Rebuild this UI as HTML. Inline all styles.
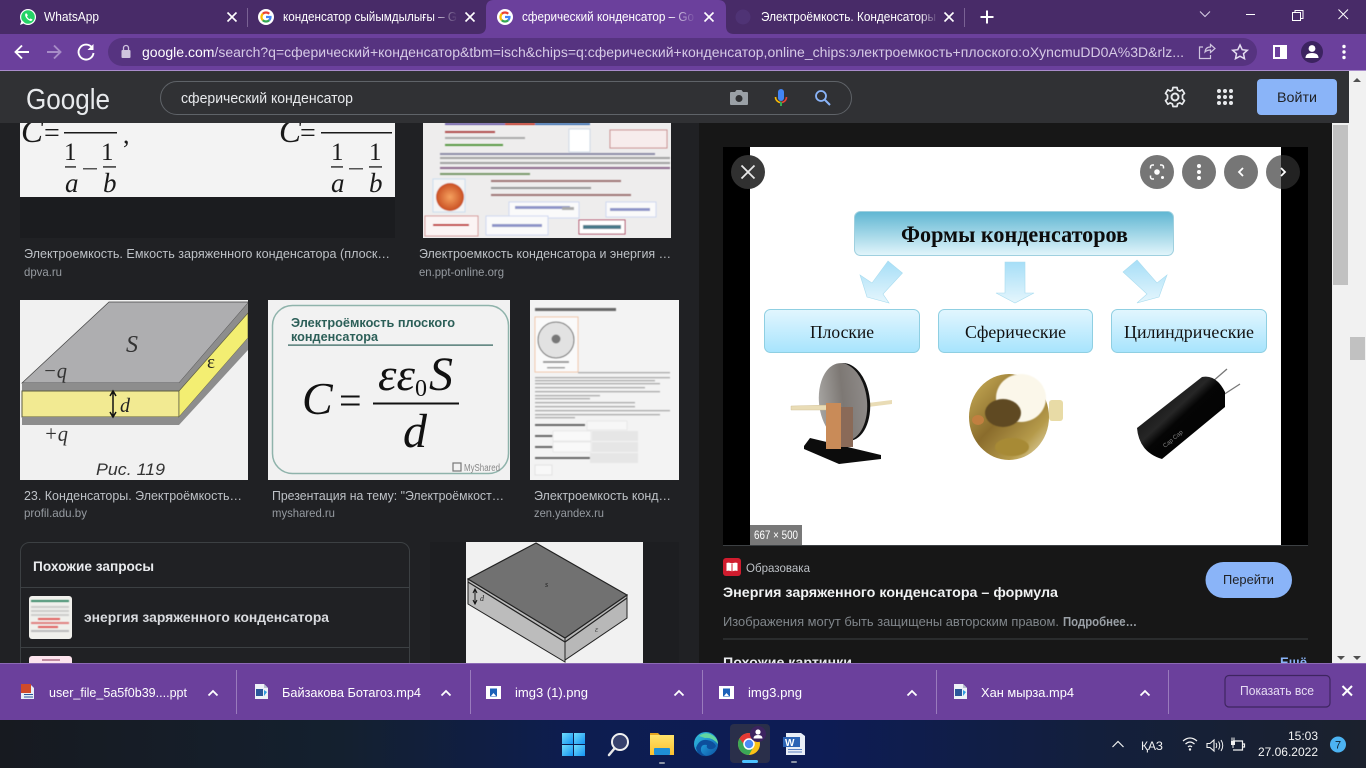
<!DOCTYPE html>
<html lang="ru"><head><meta charset="utf-8"><title>сферический конденсатор – Google</title>
<style>
html,body{margin:0;padding:0;width:1366px;height:768px;overflow:hidden;background:#202124}
svg{display:block;position:absolute;left:0;top:0}
text{font-family:"Liberation Sans","Noto Sans CJK SC",sans-serif;white-space:pre}
.serif{font-family:"Liberation Serif",serif}
.ti{fill:#bdc1c6;font-size:13px}
.si{fill:#969ba1;font-size:12px}
.tab{fill:#fff;font-size:12.5px}
.dl{fill:#fff;font-size:13px}
</style></head><body>
<svg width="1366" height="768" viewBox="0 0 1366 768" xmlns="http://www.w3.org/2000/svg">
<defs>
<linearGradient id="topbox" x1="0" y1="0" x2="0" y2="1"><stop offset="0" stop-color="#5fb6d2"/><stop offset="1" stop-color="#e2f5fb"/></linearGradient>
<linearGradient id="subbox" x1="0" y1="0" x2="0" y2="1"><stop offset="0" stop-color="#e2f6fe"/><stop offset="1" stop-color="#a7e4fd"/></linearGradient>
<linearGradient id="arr" x1="0" y1="0" x2="0" y2="1"><stop offset="0" stop-color="#a6def7"/><stop offset="1" stop-color="#e5f6fd"/></linearGradient>
<linearGradient id="task" x1="0" y1="0" x2="1" y2="0"><stop offset="0" stop-color="#171a20"/><stop offset=".25" stop-color="#14202f"/><stop offset=".42" stop-color="#0d1d50"/><stop offset=".6" stop-color="#0d1c55"/><stop offset=".8" stop-color="#131f3c"/><stop offset="1" stop-color="#1b212d"/></linearGradient>
<linearGradient id="win" x1="0" y1="0" x2="1" y2="1"><stop offset="0" stop-color="#6fdcfb"/><stop offset="1" stop-color="#1493f2"/></linearGradient>
<linearGradient id="fold" x1="0" y1="0" x2="0" y2="1"><stop offset="0" stop-color="#ffe36b"/><stop offset="1" stop-color="#fcc02e"/></linearGradient>
<linearGradient id="edge" x1="0" y1="0" x2="1" y2="1"><stop offset="0" stop-color="#35c1d8"/><stop offset=".5" stop-color="#1d8fd0"/><stop offset="1" stop-color="#0c4f9f"/></linearGradient>
<linearGradient id="ball" x1="0" y1="0" x2="1" y2="1"><stop offset="0" stop-color="#cdb25a"/><stop offset=".45" stop-color="#8a6c2c"/><stop offset=".75" stop-color="#b59a4a"/><stop offset="1" stop-color="#eee5c4"/></linearGradient>
<linearGradient id="disc" x1="0" y1="0" x2="1" y2="0"><stop offset="0" stop-color="#a5a3a0"/><stop offset=".5" stop-color="#7d7874"/><stop offset="1" stop-color="#8e8a88"/></linearGradient>
<linearGradient id="cap" x1="0" y1="0" x2="1" y2="1"><stop offset="0" stop-color="#000"/><stop offset=".42" stop-color="#262626"/><stop offset=".5" stop-color="#050505"/><stop offset="1" stop-color="#000"/></linearGradient>
<radialGradient id="orb"><stop offset="0" stop-color="#f5a15f"/><stop offset="1" stop-color="#c94f22"/></radialGradient>
<linearGradient id="fd" x1="0" y1="0" x2="1" y2="0"><stop offset="0" stop-color="#482b68" stop-opacity="0"/><stop offset="1" stop-color="#482b68"/></linearGradient>
<linearGradient id="fd2" x1="0" y1="0" x2="1" y2="0"><stop offset="0" stop-color="#6b409c" stop-opacity="0"/><stop offset="1" stop-color="#6b409c"/></linearGradient>
<filter id="b1"><feGaussianBlur stdDeviation=".55"/></filter>
<filter id="b2"><feGaussianBlur stdDeviation=".45"/></filter>
<clipPath id="cA"><rect x="20" y="300" width="228" height="180"/></clipPath>
<clipPath id="cD"><rect x="466" y="542" width="177" height="121"/></clipPath>
<clipPath id="cP"><rect x="699" y="123" width="633" height="540"/></clipPath>
<clipPath id="cI"><rect x="20" y="123" width="375" height="74"/></clipPath>
<clipPath id="cT"><rect x="0" y="0" width="1366" height="34"/></clipPath>
<clipPath id="cR"><rect x="20" y="123" width="660" height="540"/></clipPath>
<g id="gfav"><circle r="8" fill="#fff"/><g fill="none" stroke-width="2.200"><path d="M-3.200-3.200A4.500 4.500 0 0 1 3.200-3.200" stroke="#ea4335"/><path d="M-3.200-3.200A4.500 4.500 0 0 0-3.200 3.200" stroke="#fbbc05"/><path d="M-3.200 3.200A4.500 4.500 0 0 0 3.200 3.200" stroke="#34a853"/><path d="M3.200 3.200A4.500 4.500 0 0 0 4.500 0H0" stroke="#4285f4"/></g></g>
<path id="gx" d="M-4.500-4.500L4.500 4.500M4.500-4.500L-4.500 4.500" fill="none" stroke="#fff" stroke-width="1.600"/>
<path id="gup" d="M-4.500 2.500L0-2L4.500 2.500" fill="none" stroke="#fff" stroke-width="1.800"/>
<g id="gdoc"><path d="M0 0h9l4 4v11H0z" fill="#eef2f7"/><path d="M9 0v4h4" fill="#b8c4d2"/><rect x="1" y="5" width="7" height="7" fill="#2b579a"/><path d="M9 6l3 2-3 4z" fill="#2f9be0"/></g>
<g id="gimg"><rect width="15" height="13" fill="#fff"/><rect x="4" y="2.500" width="7" height="8" fill="#1c62b9"/><path d="M5 10l2.500-3 2.500 3z" fill="#fff"/></g>
</defs>

<!-- page -->
<rect width="1366" height="768" fill="#202124"/>

<!-- results -->
<g clip-path="url(#cR)">
<rect x="20" y="123" width="375" height="115" fill="#1b1c1f"/>
<rect x="20" y="123" width="375" height="74" fill="#f3f3f3"/>
<g clip-path="url(#cI)" fill="#1a1a1a">
 <text class="serif" x="21" y="142" font-size="33" font-style="italic">C</text><text class="serif" x="44" y="142" font-size="28">=</text>
 <rect x="64" y="132" width="53" height="1.500"/>
 <text class="serif" x="64" y="160" font-size="25">1</text><text class="serif" x="101" y="160" font-size="25">1</text>
 <rect x="65" y="166" width="11" height="1.800" fill="#555"/><rect x="83" y="168" width="14" height="1.500" fill="#555"/><rect x="103" y="166" width="13" height="1.800" fill="#555"/>
 <text class="serif" x="65" y="192" font-size="27" font-style="italic">a</text><text class="serif" x="103" y="192" font-size="27" font-style="italic">b</text>
 <text class="serif" x="123" y="143" font-size="26">,</text>
 <text class="serif" x="279" y="142" font-size="33" font-style="italic">C</text><text class="serif" x="300" y="142" font-size="28">=</text>
 <rect x="321" y="132" width="71" height="1.500"/>
 <text class="serif" x="331" y="160" font-size="25">1</text><text class="serif" x="369" y="160" font-size="25">1</text>
 <rect x="331" y="166" width="12" height="1.800" fill="#555"/><rect x="349" y="168" width="14" height="1.500" fill="#555"/><rect x="369" y="166" width="13" height="1.800" fill="#555"/>
 <text class="serif" x="331" y="192" font-size="27" font-style="italic">a</text><text class="serif" x="369" y="192" font-size="27" font-style="italic">b</text>
</g>
<rect x="423" y="123" width="248" height="115" fill="#eeeded"/>
<g filter="url(#b1)">
 <rect x="445" y="123" width="60" height="2" fill="#6d5fa8"/><rect x="505" y="123" width="30" height="2" fill="#c0392b"/><rect x="535" y="123" width="55" height="2" fill="#3d6fb0"/>
 <rect x="445" y="131" width="50" height="2" fill="#b05050"/><rect x="445" y="137" width="80" height="2" fill="#aaa"/><rect x="445" y="144" width="58" height="2" fill="#5a9a45"/>
 <rect x="569" y="129" width="21" height="23" fill="#fff" stroke="#cdd8e5"/><rect x="610" y="130" width="57" height="18" fill="#f7ecec" stroke="#c98b8b"/>
 <rect x="440" y="153" width="215" height="2" fill="#8d8da8"/><rect x="440" y="157" width="230" height="2" fill="#a3a3a3"/><rect x="440" y="162" width="230" height="2" fill="#a3a3a3"/><rect x="440" y="167" width="230" height="2" fill="#8e6a8e"/><rect x="440" y="173" width="90" height="2" fill="#7a9a6a"/>
 <rect x="491" y="180" width="130" height="2" fill="#a07777"/><rect x="491" y="187" width="100" height="2" fill="#999"/><rect x="491" y="194" width="140" height="2" fill="#a07777"/>
 <rect x="433" y="179" width="32" height="33" fill="#f4f4f4" stroke="#cde"/>
 <ellipse cx="450" cy="197" rx="14" ry="14" fill="url(#orb)"/>
 <rect x="509" y="202" width="70" height="16" fill="#fafafa" stroke="#cfd8f0"/><rect x="606" y="202" width="50" height="15" fill="#fafafa" stroke="#cfd8f0"/>
 <rect x="425" y="216" width="53" height="20" fill="#fbf4f4" stroke="#d69a9a"/><rect x="486" y="216" width="62" height="19" fill="#fafafa" stroke="#cfd8f0"/><rect x="579" y="220" width="46" height="14" fill="#fff" stroke="#b04060"/>
 <rect x="433" y="224" width="36" height="2" fill="#c02020"/><rect x="492" y="224" width="50" height="3" fill="#8d94c8"/><rect x="583" y="225" width="38" height="4" fill="#4a7a8a"/>
 <rect x="515" y="206" width="55" height="3" fill="#8d94c8"/><rect x="610" y="208" width="40" height="3" fill="#8d94c8"/><rect x="562" y="207" width="12" height="3" fill="#aaa"/>
</g>
<text class="ti" x="24" y="258" textLength="366" lengthAdjust="spacingAndGlyphs">Электроемкость. Емкость заряженного конденсатора (плоск…</text>
<text class="si" x="24" y="276" textLength="38" lengthAdjust="spacingAndGlyphs">dpva.ru</text>
<text class="ti" x="419" y="258" textLength="252" lengthAdjust="spacingAndGlyphs">Электроемкость конденсатора и энергия …</text>
<text class="si" x="419" y="276" textLength="85" lengthAdjust="spacingAndGlyphs">en.ppt-online.org</text>

<!-- image a -->
<g clip-path="url(#cA)">
 <rect x="20" y="300" width="228" height="180" fill="#f1f1f1"/>
 <path d="M22 383L109 302H248V303L179 383z" fill="#aeaeb0" stroke="#444" stroke-width=".7"/>
 <rect x="22" y="383" width="157" height="8" fill="#8d8d8d"/>
 <rect x="22" y="391" width="157" height="26" fill="#f2ea92" stroke="#5d5d40" stroke-width="1"/>
 <rect x="22" y="417" width="157" height="8" fill="#8d8d8d"/>
 <path d="M179 383L248 303V313L179 391z" fill="#8d8d8d"/>
 <path d="M179 391L248 313V338L179 417z" fill="#f3ee72" stroke="#5d5d40" stroke-width=".7"/>
 <path d="M179 417L248 338V350L179 425z" fill="#8d8d8d"/>
 <path d="M113 392V416M110 396L113 391L116 396M110 412L113 417L116 412" stroke="#111" stroke-width="1.500" fill="none"/>
 <text class="serif" x="126" y="352" font-size="24" font-style="italic" fill="#333">S</text>
 <text class="serif" x="43" y="378" font-size="22" font-style="italic" fill="#333" textLength="24" lengthAdjust="spacingAndGlyphs">−q</text>
 <text class="serif" x="44" y="441" font-size="22" font-style="italic" fill="#333" textLength="24" lengthAdjust="spacingAndGlyphs">+q</text>
 <text class="serif" x="120" y="412" font-size="20" font-style="italic" fill="#222">d</text>
 <text class="serif" x="207" y="368" font-size="19" fill="#222">ε</text>
 <text x="96" y="475" font-size="17" font-style="italic" fill="#333" textLength="69" lengthAdjust="spacingAndGlyphs">Рис. 119</text>
</g>
<text class="ti" x="24" y="500" textLength="218" lengthAdjust="spacingAndGlyphs">23. Конденсаторы. Электроёмкость…</text>
<text class="si" x="24" y="517" textLength="63" lengthAdjust="spacingAndGlyphs">profil.adu.by</text>

<!-- image b -->
<rect x="268" y="300" width="242" height="180" fill="#f1f1f1"/>
<rect x="272.500" y="305.500" width="236" height="168" rx="20" fill="#f2f2f2" stroke="#8fb3ab" stroke-width="1.500"/>
<text x="291" y="327" font-size="13" font-weight="bold" fill="#2c5f58" textLength="164" lengthAdjust="spacingAndGlyphs">Электроёмкость плоского</text>
<text x="291" y="341" font-size="13" font-weight="bold" fill="#2c5f58" textLength="87" lengthAdjust="spacingAndGlyphs">конденсатора</text>
<rect x="288" y="344.500" width="205" height="1.200" fill="#2c5f58"/>
<text class="serif" x="302" y="414" font-size="46" font-style="italic" fill="#111">C</text>
<text class="serif" x="339" y="414" font-size="40" fill="#111">=</text>
<rect x="373" y="402.500" width="86" height="2" fill="#111"/>
<text class="serif" x="378" y="390" font-size="46" font-style="italic" fill="#111" textLength="37" lengthAdjust="spacingAndGlyphs">εε</text>
<text class="serif" x="415" y="396" font-size="24" fill="#111">0</text>
<text class="serif" x="429" y="390" font-size="48" font-style="italic" fill="#111">S</text>
<text class="serif" x="403" y="447" font-size="48" font-style="italic" fill="#111">d</text>
<rect x="453" y="463" width="8" height="8" fill="none" stroke="#777" stroke-width="1.200"/>
<text x="464" y="471" font-size="10" fill="#888" textLength="36" lengthAdjust="spacingAndGlyphs">MyShared</text>
<text class="ti" x="272" y="500" textLength="232" lengthAdjust="spacingAndGlyphs">Презентация на тему: "Электроёмкост…</text>
<text class="si" x="272" y="517" textLength="63" lengthAdjust="spacingAndGlyphs">myshared.ru</text>

<!-- image c -->
<rect x="530" y="300" width="149" height="180" fill="#f3f3f3"/>
<g filter="url(#b1)">
 <rect x="535" y="308" width="81" height="3" fill="#666"/>
 <rect x="535" y="317" width="43" height="55" fill="#fafafa" stroke="#f0c6a8"/>
 <circle cx="556" cy="340" r="18" fill="#e2e2e2" stroke="#666" stroke-width="1"/><circle cx="556" cy="339" r="4.500" fill="#777"/>
 <rect x="543" y="361" width="26" height="2" fill="#999"/><rect x="547" y="367" width="18" height="1.500" fill="#999"/>
 <rect x="578" y="372" width="92" height="1.300" fill="#aaa"/>
 <rect x="535" y="377" width="135" height="1.300" fill="#aaa"/><rect x="535" y="380" width="120" height="1.300" fill="#aaa"/><rect x="535" y="383" width="125" height="1.300" fill="#aaa"/><rect x="535" y="387" width="110" height="1.300" fill="#aaa"/><rect x="535" y="391" width="125" height="1.300" fill="#aaa"/><rect x="535" y="395" width="65" height="1.300" fill="#aaa"/><rect x="535" y="398" width="55" height="1.300" fill="#aaa"/><rect x="535" y="402" width="100" height="1.300" fill="#aaa"/><rect x="535" y="406" width="100" height="1.300" fill="#aaa"/><rect x="535" y="410" width="135" height="1.300" fill="#aaa"/><rect x="535" y="414" width="125" height="1.300" fill="#aaa"/><rect x="535" y="417" width="40" height="1.300" fill="#aaa"/>
 <rect x="535" y="424" width="50" height="2" fill="#666"/><rect x="587" y="421" width="40" height="9" fill="#f7f7f7" stroke="#e8e8e8"/>
 <rect x="535" y="435" width="19" height="2" fill="#666"/><rect x="553" y="431" width="38" height="10" fill="#f9f9f9" stroke="#e8e8e8"/><rect x="592" y="431" width="46" height="10" fill="#e6e6e6"/>
 <rect x="535" y="446" width="19" height="2" fill="#666"/><rect x="553" y="442" width="38" height="10" fill="#f9f9f9" stroke="#e8e8e8"/><rect x="592" y="442" width="46" height="10" fill="#e6e6e6"/>
 <rect x="535" y="457" width="55" height="2" fill="#666"/><rect x="590" y="453" width="48" height="10" fill="#e6e6e6"/>
 <rect x="535" y="465" width="17" height="10" fill="#f8f8f8" stroke="#e2e2e2"/>
</g>
<text class="ti" x="534" y="500" textLength="137" lengthAdjust="spacingAndGlyphs">Электроемкость конд…</text>
<text class="si" x="534" y="517" textLength="70" lengthAdjust="spacingAndGlyphs">zen.yandex.ru</text>

<!-- related -->
<rect x="20.500" y="542.500" width="389" height="140" rx="9" fill="#202124" stroke="#3c4043"/>
<text x="33" y="571" font-size="14" font-weight="bold" fill="#e8eaed" textLength="121" lengthAdjust="spacingAndGlyphs">Похожие запросы</text>
<rect x="21" y="587" width="388" height="1" fill="#3c4043"/>
<rect x="21" y="647" width="388" height="1" fill="#3c4043"/>
<rect x="29" y="596" width="43" height="43" rx="3" fill="#f0f0ec"/>
<g filter="url(#b1)"><rect x="31" y="600" width="38" height="2" fill="#3e8a6a"/><rect x="31" y="606" width="38" height="2" fill="#ccc"/><rect x="31" y="610" width="38" height="2" fill="#ccc"/><rect x="31" y="614" width="38" height="2" fill="#ccc"/><rect x="38" y="618" width="22" height="2" fill="#e06060"/><rect x="31" y="622" width="38" height="2" fill="#e08080"/><rect x="38" y="626" width="20" height="2" fill="#e06060"/><rect x="31" y="630" width="38" height="2" fill="#bbb"/></g>
<text x="84" y="622" font-size="14" font-weight="bold" fill="#d8dade" textLength="245" lengthAdjust="spacingAndGlyphs">энергия заряженного конденсатора</text>
<rect x="29" y="656" width="43" height="20" rx="3" fill="#fde4ee"/>
<rect x="42" y="659" width="18" height="2" fill="#c08aa0"/>

<rect x="430" y="542" width="249" height="121" fill="#1d1e21"/>
<g clip-path="url(#cD)">
 <rect x="466" y="542" width="177" height="121" fill="#f1f1f1"/>
 <path d="M565 638V660L627 618V595z" fill="#b8b8b8" stroke="#222"/>
 <path d="M468 604L565 662V638L468 579z" fill="#bcbcbc" stroke="#222"/>
 <path d="M536 543L627 595L565 638L468 579z" fill="#717171" stroke="#222" stroke-width="1.200"/>
 <path d="M468 582L565 642L627 598" fill="none" stroke="#222" stroke-width="1.200"/>
 <path d="M475 590V603M473 593L475 589L477 593M473 600L475 604L477 600" fill="none" stroke="#111"/>
 <text class="serif" x="480" y="601" font-size="8" font-style="italic" fill="#222">d</text>
 <text class="serif" x="545" y="587" font-size="8" font-style="italic" fill="#222">s</text>
 <text class="serif" x="595" y="632" font-size="8" font-style="italic" fill="#444">ε</text>
</g>
</g>

<!-- side panel -->
<rect x="699" y="123" width="633" height="540" fill="#171717"/>
<g clip-path="url(#cP)">
 <rect x="723" y="147" width="585" height="398" fill="#000"/>
 <rect x="750" y="147" width="531" height="398" fill="#fff"/>
 <rect x="854.500" y="211.500" width="319" height="44" rx="6" fill="url(#topbox)" stroke="#9fd0df"/>
 <text class="serif" x="901" y="242" font-size="23" font-weight="bold" fill="#0c0c0c" textLength="227" lengthAdjust="spacingAndGlyphs">Формы конденсаторов</text>
 <path d="M888 261L902.500 273L883 294L889 303L867 297L860 275L872 283z" fill="url(#arr)" stroke="#a9dcef" stroke-width=".6"/>
 <path d="M1005 262H1025V293H1034L1015 303L996 293H1005z" fill="url(#arr)" stroke="#a9dcef" stroke-width=".6"/>
 <path d="M1137 260L1157 283L1167 275L1159 297L1137 303L1147 294L1123 272z" fill="url(#arr)" stroke="#a9dcef" stroke-width=".6"/>
 <rect x="764.500" y="309.500" width="155" height="43" rx="6" fill="url(#subbox)" stroke="#8fcfe2"/>
 <rect x="938.500" y="309.500" width="154" height="43" rx="6" fill="url(#subbox)" stroke="#8fcfe2"/>
 <rect x="1111.500" y="309.500" width="155" height="43" rx="6" fill="url(#subbox)" stroke="#8fcfe2"/>
 <text class="serif" x="810" y="338" font-size="18" fill="#111" textLength="64" lengthAdjust="spacingAndGlyphs">Плоские</text>
 <text class="serif" x="965" y="338" font-size="18" fill="#111" textLength="101" lengthAdjust="spacingAndGlyphs">Сферические</text>
 <text class="serif" x="1124" y="338" font-size="18" fill="#111" textLength="130" lengthAdjust="spacingAndGlyphs">Цилиндрические</text>
 <!-- flat capacitor -->
 <path d="M810 438L881 455V459L839 464L804 449V446z" fill="#0c0c0c"/>
 <path d="M860 404L892 400V404L860 408z" fill="#e9dcb6"/>
 <ellipse cx="846" cy="402" rx="24" ry="39" transform="rotate(-6 846 402)" fill="#111"/>
 <ellipse cx="843" cy="402" rx="24" ry="39" transform="rotate(-6 843 402)" fill="url(#disc)"/>
 <path d="M791 406L830 405V410L791 410z" fill="#e9dcb6" stroke="#cbb98d" stroke-width=".4"/>
 <rect x="826" y="403" width="15" height="46" fill="#c98b58"/><rect x="841" y="407" width="12" height="40" fill="#8a6a58"/>
 <!-- sphere -->
 <rect x="1049" y="400" width="14" height="21" rx="3" fill="#e8dba6"/>
 <ellipse cx="1009" cy="417" rx="40" ry="43" fill="url(#ball)"/>
 <ellipse cx="1021" cy="398" rx="25" ry="24" fill="#fbf7ea" filter="url(#b1)"/>
 <ellipse cx="1003" cy="413" rx="18" ry="14" fill="#5f4a24" filter="url(#b1)"/>
 <ellipse cx="1012" cy="447" rx="17" ry="9" fill="#a78a35" filter="url(#b1)"/>
 <ellipse cx="978" cy="420" rx="6" ry="5" fill="#c27f40"/>
 <!-- cylinder -->
 <path d="M1212 382L1227 369M1223 395L1240 384" stroke="#777" stroke-width="1.300"/>
 <path d="M1137 428L1202 377Q1216 374 1225 392L1225 407L1162 459Q1139 452 1137 428z" fill="url(#cap)"/>
 <text x="0" y="0" font-size="6" fill="#888" transform="translate(1165 448) rotate(-40)">Cap Cap</text>
 <!-- dims -->
 <rect x="750" y="525" width="52" height="20" fill="#787878"/>
 <text x="754" y="539" font-size="12" fill="#fff" textLength="44" lengthAdjust="spacingAndGlyphs">667 × 500</text>
 <!-- overlay buttons -->
 <circle cx="748" cy="172" r="17" fill="rgba(50,50,50,.96)"/>
 <path d="M741.500 165.500L754.500 178.500M754.500 165.500L741.500 178.500" stroke="#e8e8e8" stroke-width="1.800" fill="none"/>
 <circle cx="1157" cy="172" r="17" fill="rgba(50,50,50,.67)"/><circle cx="1199" cy="172" r="17" fill="rgba(50,50,50,.67)"/><circle cx="1241" cy="172" r="17" fill="rgba(50,50,50,.67)"/><circle cx="1283" cy="172" r="17" fill="rgba(50,50,50,.67)"/>
 <circle cx="1157" cy="172" r="2.800" fill="#fff"/>
 <path d="M1150.500 168.500V167a2 2 0 0 1 2-2h1.500M1160 165h1.500a2 2 0 0 1 2 2v1.500M1150.500 175.500V177a2 2 0 0 0 2 2h1.500" fill="none" stroke="#fff" stroke-width="1.500"/><circle cx="1162.500" cy="177.500" r="1.500" fill="#fff"/>
 <circle cx="1199" cy="166" r="2" fill="#fff"/><circle cx="1199" cy="172" r="2" fill="#fff"/><circle cx="1199" cy="178" r="2" fill="#fff"/>
 <path d="M1243 168L1239 172L1243 176" fill="none" stroke="#fff" stroke-width="1.800"/>
 <path d="M1281 168L1285 172L1281 176" fill="none" stroke="#fff" stroke-width="1.800"/>
 <!-- info -->
 <rect x="723" y="545" width="585" height="1" fill="#3c4043"/>
 <rect x="723" y="558" width="18" height="18" rx="3" fill="#d01c2e"/>
 <path d="M726.500 563q2.500-1 5.500.5q3-1.500 5.500-.5v8q-2.500-1-5.500.5q-3-1.500-5.500-.5z" fill="#fff"/><path d="M732 564v8" stroke="#d01c2e"/>
 <text x="746" y="572" font-size="12" fill="#bdc1c6" textLength="64" lengthAdjust="spacingAndGlyphs">Образовака</text>
 <text x="723" y="597" font-size="14" font-weight="bold" fill="#f1f3f4" textLength="335" lengthAdjust="spacingAndGlyphs">Энергия заряженного конденсатора – формула</text>
 <text x="723" y="626" font-size="13" fill="#80868b" textLength="336" lengthAdjust="spacingAndGlyphs">Изображения могут быть защищены авторским правом.</text>
 <text x="1063" y="626" font-size="13" font-weight="bold" fill="#9aa0a6" textLength="74" lengthAdjust="spacingAndGlyphs">Подробнее…</text>
 <rect x="1205.500" y="562" width="86.500" height="36" rx="18" fill="#8ab4f8"/>
 <text x="1223" y="584" font-size="13" fill="#202124" textLength="51" lengthAdjust="spacingAndGlyphs">Перейти</text>
 <rect x="723" y="638.500" width="585" height="1" fill="#3c4043"/>
 <text x="723" y="667" font-size="14" font-weight="bold" fill="#e8eaed" textLength="129" lengthAdjust="spacingAndGlyphs">Похожие картинки</text>
 <text x="1280" y="667" font-size="14" font-weight="bold" fill="#8ab4f8" textLength="27" lengthAdjust="spacingAndGlyphs">Ещё</text>
</g>

<!-- scrollbars -->
<rect x="1332" y="123" width="17" height="540" fill="#f1f1f1"/>
<rect x="1333" y="125" width="15" height="160" fill="#c1c1c1"/>
<path d="M1337 656h8l-4 4z" fill="#505050"/>
<rect x="1349" y="71" width="17" height="592" fill="#f1f1f1"/>
<path d="M1353 82h8l-4-4z" fill="#505050"/>
<rect x="1350" y="337" width="15" height="23" fill="#c1c1c1"/>
<path d="M1353 656h8l-4 4z" fill="#505050"/>

<!-- google header -->
<rect x="0" y="71" width="1349" height="52" fill="#303134"/>
<text x="26" y="109" font-size="29" fill="#e8eaed" textLength="84" lengthAdjust="spacingAndGlyphs">Google</text>
<rect x="160.500" y="81.500" width="691" height="33" rx="16.500" fill="#303134" stroke="#5f6368"/>
<text x="181" y="103" font-size="14.500" fill="#e8eaed" textLength="172" lengthAdjust="spacingAndGlyphs">сферический конденсатор</text>
<path d="M731 92h4l1.500-2h5l1.500 2h4a1 1 0 0 1 1 1v11a1 1 0 0 1-1 1h-16a1 1 0 0 1-1-1V93a1 1 0 0 1 1-1z" fill="#9aa0a6"/><circle cx="739" cy="98.500" r="3.500" fill="#303134"/>
<rect x="778" y="89" width="6" height="12" rx="3" fill="#4285f4"/>
<path d="M775.500 97a5.500 5.500 0 0 0 5.500 5.500" fill="none" stroke="#fbbc05" stroke-width="1.600"/>
<path d="M786.500 97a5.500 5.500 0 0 1-5.500 5.500" fill="none" stroke="#ea4335" stroke-width="1.600"/>
<rect x="780" y="102" width="2" height="4" fill="#34a853"/>
<circle cx="821" cy="96" r="5" fill="none" stroke="#8ab4f8" stroke-width="1.800"/><path d="M825 100L830 105" stroke="#8ab4f8" stroke-width="2"/>
<g transform="translate(1175 97)" fill="none" stroke="#e8eaed"><circle r="3.500" stroke-width="2"/><path d="M-2-9.500h4l.6 2.600 2.200 1 2.400-1.300 2.300 3.600-2 1.800v3.600l2 1.800-2.300 3.600-2.400-1.300-2.200 1-.6 2.600h-4l-.6-2.600-2.200-1-2.400 1.300-2.300-3.600 2-1.800v-3.600l-2-1.800 2.300-3.600 2.400 1.300 2.200-1z" stroke-width="1.700" stroke-linejoin="round"/></g>
<g fill="#e8eaed"><circle cx="1219" cy="91" r="2"/><circle cx="1225" cy="91" r="2"/><circle cx="1231" cy="91" r="2"/><circle cx="1219" cy="97" r="2"/><circle cx="1225" cy="97" r="2"/><circle cx="1231" cy="97" r="2"/><circle cx="1219" cy="103" r="2"/><circle cx="1225" cy="103" r="2"/><circle cx="1231" cy="103" r="2"/></g>
<rect x="1257" y="79" width="80" height="36" rx="4" fill="#8ab4f8"/>
<text x="1277" y="102" font-size="14" fill="#202124" textLength="40" lengthAdjust="spacingAndGlyphs">Войти</text>

<!-- tab strip -->
<rect width="1366" height="34" fill="#482b68"/>
<path d="M478 34q8 0 8-8V8q0-8 8-8h224q8 0 8 8v18q0 8 8 8z" fill="#6b409c"/>
<circle cx="28" cy="17" r="8" fill="#fff"/><circle cx="28" cy="17" r="6.800" fill="#25d366"/><path d="M20 25l1.800-5 3 3z" fill="#fff"/>
<path d="M25.500 13.500q-1 1.500.5 4t4.500 3.500q1.500 0 2-1.500l-2-1-1 .8q-1.800-1-2.500-2.800l.8-1-.9-2z" fill="#fff"/>
<text class="tab" x="44" y="21" textLength="55" lengthAdjust="spacingAndGlyphs">WhatsApp</text>
<use href="#gx" x="232" y="17"/>
<rect x="247" y="8" width="1" height="19" fill="#7a6294"/>
<use href="#gfav" x="266" y="17"/>
<g clip-path="url(#cT)"><text class="tab" x="283" y="21" textLength="174" lengthAdjust="spacingAndGlyphs">конденсатор сыйымдылығы – G</text></g>
<rect x="432" y="4" width="26" height="26" fill="url(#fd)"/>
<use href="#gx" x="470" y="17"/>
<use href="#gfav" x="505" y="17"/>
<text class="tab" x="522" y="21" textLength="172" lengthAdjust="spacingAndGlyphs">сферический конденсатор – Go</text>
<rect x="670" y="4" width="26" height="26" fill="url(#fd2)"/>
<use href="#gx" x="709" y="17"/>
<circle cx="743" cy="17" r="7.500" fill="#4f3375"/>
<text class="tab" x="761" y="21" textLength="175" lengthAdjust="spacingAndGlyphs">Электроёмкость. Конденсаторы</text>
<rect x="920" y="4" width="18" height="26" fill="url(#fd)"/>
<use href="#gx" x="949" y="17"/>
<rect x="964" y="8" width="1" height="19" fill="#7a6294"/>
<path d="M980.500 17h13M987 10.500v13" stroke="#fff" stroke-width="2"/>
<path d="M1200 11.500L1205 16.500L1210 11.500" fill="none" stroke="#d9cfe6" stroke-width="1"/>
<rect x="1246" y="14" width="9" height="1" fill="#fff"/>
<rect x="1292.500" y="12.500" width="8" height="8" fill="none" stroke="#fff"/>
<path d="M1295 12.500V10.500h8v8h-2.500" fill="none" stroke="#fff"/>
<path d="M1338.500 9.500L1348 19M1348 9.500L1338.500 19" stroke="#fff" stroke-width="1"/>

<!-- toolbar -->
<rect y="34" width="1366" height="36" fill="#6b409c"/>
<rect y="70" width="1366" height="1" fill="#a98ccb"/>
<path d="M29 52H16M22 45.500L15.500 52L22 58.500" fill="none" stroke="#fff" stroke-width="1.900"/>
<path d="M47 52H60M54 45.500L60.500 52L54 58.500" fill="none" stroke="#a78cc7" stroke-width="1.900"/>
<path d="M92 47.500A7.500 7.500 0 1 0 93.500 53" fill="none" stroke="#fff" stroke-width="1.900"/><path d="M93.500 44v6h-6z" fill="#fff"/>
<rect x="108" y="38" width="1149" height="28" rx="14" fill="#563380"/>
<rect x="121.500" y="50" width="9" height="8" rx="1" fill="#cfc4de"/><path d="M123.500 50v-2a2.500 2.500 0 0 1 5 0v2" fill="none" stroke="#cfc4de" stroke-width="1.300"/>
<text x="142" y="57" font-size="13.500" fill="#d6cae6" textLength="1042" lengthAdjust="spacingAndGlyphs"><tspan fill="#fff">google.com</tspan>/search?q=сферический+конденсатор&amp;tbm=isch&amp;chips=q:сферический+конденсатор,online_chips:электроемкость+плоского:oXyncmuDD0A%3D&amp;rlz...</text>
<path d="M1203 47h-3.500v11.500h11V55M1205 52q.5-5 5.500-5V44.500L1215 48.500l-4.500 4V50q-3.500 0-5.500 2z" fill="none" stroke="#cfc4de" stroke-width="1.200"/>
<path d="M1240 45l2.200 4.700 5.100.6-3.800 3.400 1 5-4.500-2.500-4.500 2.500 1-5-3.800-3.400 5.100-.6z" fill="none" stroke="#e5ddf0" stroke-width="1.500"/>
<rect x="1273" y="45" width="14" height="14" fill="#fff"/><rect x="1275" y="47" width="5" height="10" fill="#6b409c"/>
<circle cx="1312" cy="52" r="11" fill="#3c2360"/><circle cx="1312" cy="48.500" r="3.400" fill="#fff"/><path d="M1305.500 58q0-5 6.500-5t6.500 5z" fill="#fff"/>
<circle cx="1344" cy="46.500" r="1.700" fill="#fff"/><circle cx="1344" cy="52" r="1.700" fill="#fff"/><circle cx="1344" cy="57.500" r="1.700" fill="#fff"/>

<!-- download shelf -->
<rect y="663" width="1366" height="57" fill="#6b409c"/>
<rect y="663" width="1366" height="1" fill="#8c6ab5"/>
<g fill="#9a7bbd"><rect x="236" y="670" width="1" height="44"/><rect x="470" y="670" width="1" height="44"/><rect x="702" y="670" width="1" height="44"/><rect x="936" y="670" width="1" height="44"/><rect x="1168" y="670" width="1" height="44"/></g>
<path d="M21 684h9l4 4v11H21z" fill="#e8eef6"/><rect x="21" y="684" width="10" height="9" fill="#d04a2a"/><rect x="24" y="694" width="9" height="1" fill="#2b579a"/><rect x="24" y="696.500" width="9" height="1" fill="#2b579a"/>
<text class="dl" x="49" y="697" textLength="138" lengthAdjust="spacingAndGlyphs">user_file_5a5f0b39....ppt</text>
<use href="#gup" x="213" y="693"/>
<use href="#gdoc" x="255" y="684"/>
<text class="dl" x="282" y="697" textLength="139" lengthAdjust="spacingAndGlyphs">Байзакова Ботагоз.mp4</text>
<use href="#gup" x="446" y="693"/>
<use href="#gimg" x="486" y="686"/>
<text class="dl" x="515" y="697" textLength="73" lengthAdjust="spacingAndGlyphs">img3 (1).png</text>
<use href="#gup" x="679" y="693"/>
<use href="#gimg" x="719" y="686"/>
<text class="dl" x="748" y="697" textLength="54" lengthAdjust="spacingAndGlyphs">img3.png</text>
<use href="#gup" x="912" y="693"/>
<use href="#gdoc" x="954" y="684"/>
<text class="dl" x="981" y="697" textLength="93" lengthAdjust="spacingAndGlyphs">Хан мырза.mp4</text>
<use href="#gup" x="1145" y="693"/>
<rect x="1225" y="675.500" width="105" height="31.500" rx="4" fill="none" stroke="#3e2560" stroke-width="1.200"/>
<text x="1240" y="695" font-size="13" fill="#e6dcf3" textLength="74" lengthAdjust="spacingAndGlyphs">Показать все</text>
<path d="M1342.500 686L1352 695.500M1352 686L1342.500 695.500" stroke="#fff" stroke-width="2"/>

<!-- taskbar -->
<rect y="720" width="1366" height="48" fill="url(#task)"/>
<g fill="url(#win)"><rect x="562" y="733" width="11" height="11"/><rect x="574" y="733" width="11" height="11"/><rect x="562" y="745" width="11" height="11"/><rect x="574" y="745" width="11" height="11"/></g>
<circle cx="620" cy="742" r="8" fill="#37416d" stroke="#f1f1f1" stroke-width="2"/><path d="M614 749L609 755" stroke="#e8e8e8" stroke-width="2.500" stroke-linecap="round"/>
<path d="M650 733h8l2 2h-10z" fill="#e5a41f"/><rect x="650" y="735" width="24" height="20" fill="url(#fold)"/><rect x="654" y="748" width="16" height="7" rx="1" fill="#1f8fd6"/>
<rect x="659" y="762" width="6" height="2" rx="1" fill="#8a93a5"/>
<circle cx="706" cy="744" r="12" fill="url(#edge)"/><path d="M696 748q3-9 11-8q7 1 9 6q-2 4-7 3q-3-1-2-4q-5-1-6 3q-1 6 6 8q-9 1-11-8z" fill="#0d4f9c"/><path d="M699 736q8-6 16 1q3 3 3 7q-6-7-13-6z" fill="#62d6a0"/>
<rect x="730" y="724" width="40" height="39" rx="4" fill="#2a2f4a"/>
<circle cx="749" cy="744" r="11" fill="#fbc116"/><path d="M749 733a11 11 0 0 0-9.500 5.500l5.500 9.500 4-6.500h10.500a11 11 0 0 0-10.500-8.500z" fill="#e53935"/><path d="M739.500 738.500a11 11 0 0 0 9.500 16.500l5-9h-9z" fill="#3aa757"/><circle cx="749" cy="744" r="5" fill="#4c8bf5" stroke="#fff" stroke-width="1.500"/>
<circle cx="758" cy="734" r="8" fill="#3c2360"/><circle cx="758" cy="732" r="2.600" fill="#fff"/><path d="M753.500 738.500q0-3.500 4.500-3.500t4.500 3.500z" fill="#fff"/>
<rect x="742" y="760" width="16" height="3" rx="1.500" fill="#4cc2ff"/>
<path d="M786 733h15l4 3v19h-19z" fill="#e9eef7"/><rect x="783" y="737" width="17" height="10" fill="#2b63b5"/>
<text x="785" y="746" font-size="10" font-weight="bold" fill="#fff">W</text>
<g fill="#5a80c2"><rect x="788" y="749" width="14" height="1"/><rect x="788" y="751.500" width="14" height="1"/></g>
<rect x="791" y="761" width="6" height="2" rx="1" fill="#8a93a5"/>
<path d="M1112.500 747L1118 741.500L1123.500 747" fill="none" stroke="#f0f0f0" stroke-width="1.200"/>
<text x="1141" y="750" font-size="12" fill="#f2f2f2" textLength="22" lengthAdjust="spacingAndGlyphs">ҚАЗ</text>
<path d="M1183 741q7-6 14 0M1185.500 744q4.500-4 9 0M1188 747q2-2 4 0" fill="none" stroke="#f2f2f2" stroke-width="1.200"/><circle cx="1190" cy="749.500" r="1.200" fill="#f2f2f2"/>
<path d="M1207 743.500h3l4-3.500v11l-4-3.500h-3z" fill="none" stroke="#f2f2f2" stroke-width="1.100"/><path d="M1216 743q1.500 2.500 0 5M1218.500 741.500q2.500 4 0 8M1221 740q3.500 5.500 0 11" fill="none" stroke="#f2f2f2"/>
<path d="M1233 741h9.500v9H1233M1242.500 744h2v3h-2" fill="none" stroke="#f2f2f2" stroke-width="1.200"/><rect x="1231" y="741" width="4" height="4" fill="#f2f2f2"/><path d="M1232 737.500V741M1234 737.500V741M1233 745v3" stroke="#f2f2f2"/>
<text x="1318" y="740" font-size="12" fill="#f5f5f5" text-anchor="end">15:03</text>
<text x="1318" y="756" font-size="12" fill="#f5f5f5" text-anchor="end">27.06.2022</text>
<circle cx="1338" cy="744.500" r="8" fill="#4cb3f2"/>
<text x="1338" y="748.500" font-size="11" fill="#10202e" text-anchor="middle">7</text>
</svg>
</body></html>
